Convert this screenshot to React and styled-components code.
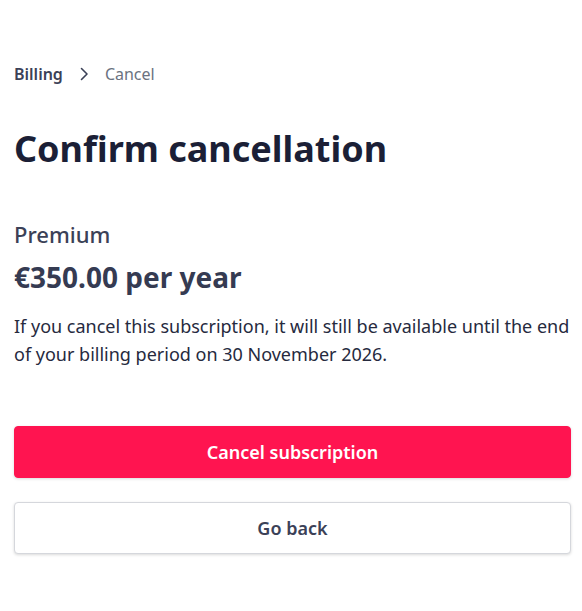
import styled, { createGlobalStyle } from "styled-components";

const GlobalStyle = createGlobalStyle`
  body {
    margin: 0;
    background: #ffffff;
    font-family: "Noto Sans", "Open Sans", sans-serif;
  }
`;

const Page = styled.main`
  display: flex;
  flex-direction: column;
  padding: 62px 11px 40px 14px;
`;

const Crumbs = styled.nav`
  display: flex;
  align-items: center;
  gap: 15px;
  font-size: 16px;
  line-height: 24px;
`;

const Crumb = styled.span`
  color: ${(p) => (p.$current ? "#6b7280" : "#3b4157")};
  font-weight: ${(p) => (p.$current ? 400 : 600)};
`;

const Title = styled.h1`
  margin: 39px 0 0;
  font-size: 36px;
  line-height: 48px;
  font-weight: 700;
  color: #1b1f36;
`;

const Plan = styled.h2`
  margin: 46px 0 0;
  font-size: 22px;
  line-height: 30px;
  font-weight: 500;
  color: #3b4157;
`;

const Price = styled.p`
  margin: 10px 0 0;
  font-size: 28px;
  line-height: 36px;
  font-weight: 700;
  color: #353b52;
`;

const Note = styled.p`
  margin: 17px 0 0;
  font-size: 18px;
  line-height: 28px;
  color: #262a3e;
`;

const Actions = styled.div`
  display: flex;
  flex-direction: column;
  gap: 24px;
  margin-top: 58px;
`;

const Button = styled.button`
  height: 52px;
  width: 100%;
  border-radius: 4px;
  font-family: inherit;
  font-size: 18px;
  font-weight: 600;
  cursor: pointer;
  border: 1px solid ${(p) => (p.$danger ? "#ff1450" : "#d5d7dc")};
  background: ${(p) => (p.$danger ? "#ff1450" : "#ffffff")};
  color: ${(p) => (p.$danger ? "#ffffff" : "#3b4157")};
  box-shadow: 0 1px 3px rgba(0, 0, 0, 0.15);
`;

const Chevron = () => (
  <svg width="12" height="16" viewBox="0 0 12 16" fill="none">
    <path d="M3.5 2.5 L9 8 L3.5 13.5" stroke="#3b4157" strokeWidth="1.6" strokeLinecap="round" strokeLinejoin="round" />
  </svg>
);

export default function App() {
  return (
    <>
      <GlobalStyle />
      <Page>
        <Crumbs>
          <Crumb>Billing</Crumb>
          <Chevron />
          <Crumb $current>Cancel</Crumb>
        </Crumbs>
        <Title>Confirm cancellation</Title>
        <Plan>Premium</Plan>
        <Price>€350.00 per year</Price>
        <Note>
          If you cancel this subscription, it will still be available until the end of your billing period on 30 November 2026.
        </Note>
        <Actions>
          <Button $danger>Cancel subscription</Button>
          <Button>Go back</Button>
        </Actions>
      </Page>
    </>
  );
}
